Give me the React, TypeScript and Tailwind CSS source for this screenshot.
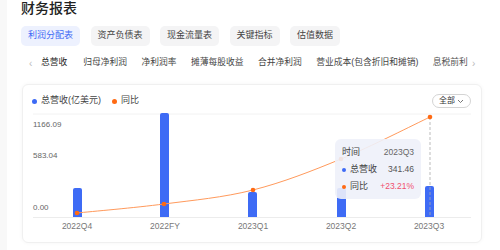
import React from "react";

const pills = ["利润分配表", "资产负债表", "现金流量表", "关键指标", "估值数据"];
const subTabs = ["总营收", "归母净利润", "净利润率", "摊薄每股收益", "合并净利润", "营业成本(包含折旧和摊销)", "息税前利"];

// bars in chart coordinates (svg is 460 x 135)
const bars = [
  { x: 50, top: 80, label: "2022Q4", cx: 54 },
  { x: 137, top: 5, label: "2022FY", cx: 142 },
  { x: 225, top: 84, label: "2023Q1", cx: 230 },
  { x: 314, top: 80, label: "2023Q2", cx: 318 },
  { x: 402, top: 78, label: "2023Q3", cx: 406 },
];
const dots = [
  [54, 105],
  [141, 96],
  [230, 82],
  [318, 51],
  [407, 9],
];
const base = 109;

export default function App() {
  return (
    <div
      className="w-[500px] h-[250px] overflow-hidden bg-white text-[#333] flex"
      style={{ fontFamily: '"Liberation Sans", "Noto Sans CJK SC", sans-serif' }}
    >
      <div className="w-[7px] shrink-0 bg-[#f8f8f8]" />
      <div className="flex-1">
        <div className="pl-[14px]">
          <div className="h-[16px] leading-[16px] text-[14px] font-medium text-[#222]">财务报表</div>

          {/* report type pills */}
          <div className="flex gap-[10.5px] mt-[10px] h-[20px]">
            {pills.map((p, i) => (
              <div
                key={p}
                className={`h-[20px] px-[7px] rounded-[5px] flex items-center text-[9px] ${
                  i === 0 ? "bg-[#edf1fe] text-[#3d6af5]" : "bg-[#f4f4f5] text-[#444]"
                }`}
              >
                {p}
              </div>
            ))}
          </div>

          {/* metric tabs */}
          <div className="flex items-center mt-[9px] h-[16px] text-[8.75px] text-[#444]">
            <span className="text-[#bbb] text-[10px] w-[20px] pl-[8px]">‹</span>
            <div className="flex gap-[14.5px] w-[427px] overflow-hidden whitespace-nowrap">
              {subTabs.map((t, i) => (
                <div
                  key={t}
                  className={`relative shrink-0 ${i === 0 ? "text-[#222] mr-[1.5px]" : ""} ${
                    i === subTabs.length - 1 ? "text-[#555]" : ""
                  }`}
                >
                  {t}
                  {i === 0 && (
                    <div className="absolute left-[7px] top-[17px] w-[12px] h-[2px] rounded bg-[#3d6af5]" />
                  )}
                </div>
              ))}
            </div>
            <span className="text-[#bbb] text-[10px] pl-[4px]">›</span>
          </div>
        </div>

        {/* chart card */}
        <div className="relative mt-[13px] ml-[15px] w-[460px] h-[159px] rounded-[6px] border border-[#f0f0f0] shadow-[0_0_4px_rgba(0,0,0,0.04)]">
          <div className="flex items-center h-[14px] mt-[9px] pl-[9px] pr-[10px] text-[9px] text-[#444]">
            <span className="w-[5px] h-[5px] rounded-full bg-[#3d6af5] mr-[4px]" />
            <span>总营收(亿美元)</span>
            <span className="w-[5px] h-[5px] rounded-full bg-[#ff6a13] ml-[11px] mr-[4px]" />
            <span>同比</span>
            <div className="ml-auto h-[14px] px-[6px] rounded-full border border-[#d4d4d4] flex items-center gap-[2px] text-[8px] text-[#333]">
              全部
              <svg width="7" height="5" viewBox="0 0 7 5">
                <path d="M1 1 L3.5 3.5 L6 1" fill="none" stroke="#666" strokeWidth="0.9" />
              </svg>
            </div>
          </div>

          <svg width="460" height="135" viewBox="0 0 460 135" className="block">
            <line x1="10" x2="448" y1="6" y2="6" stroke="#f2f2f2" strokeWidth="1" />
            <line x1="10" x2="448" y1={base + 0.5} y2={base + 0.5} stroke="#ececec" strokeWidth="1" />
            <g fontSize="8" fill="#666" fontFamily='"Liberation Sans", sans-serif'>
              <text x="10" y="19">1166.09</text>
              <text x="10" y="50">583.04</text>
              <text x="10" y="102">0.00</text>
            </g>
            {bars.map((b) => (
              <g key={b.label}>
                <path
                  d={`M${b.x} ${base} V${b.top + 2} Q${b.x} ${b.top} ${b.x + 2} ${b.top} H${b.x + 7} Q${b.x + 9} ${b.top} ${b.x + 9} ${b.top + 2} V${base} Z`}
                  fill="#3e6bf5"
                />
                <text x={b.cx} y="121" fontSize="8.5" fill="#777" textAnchor="middle" fontFamily='"Liberation Sans", sans-serif'>
                  {b.label}
                </text>
              </g>
            ))}
            <line x1="407" x2="407" y1="9" y2={base} stroke="#aaa" strokeWidth="0.8" strokeDasharray="3 2" />
            <path
              d="M54 105 C68.5 103.5 111.7 99.8 141 96 C170.3 92.2 200.5 89.5 230 82 C259.5 74.5 288.5 63.2 318 51 C347.5 38.8 392.2 16 407 9"
              fill="none"
              stroke="#ff9a5c"
              strokeWidth="1"
            />
            {dots.map(([x, y]) => (
              <circle key={x} cx={x} cy={y} r="2.3" fill="#ff6a13" />
            ))}
          </svg>

          {/* tooltip */}
          <div className="absolute left-[312px] top-[54px] w-[86px] h-[60px] rounded-[6px] bg-[#eef1f9]/90 px-[7px] pt-[5px] text-[9px]">
            <div className="flex justify-between h-[17px] items-center text-[#444]">
              <span>时间</span>
              <span className="text-[#666] text-[8.5px]">2023Q3</span>
            </div>
            <div className="flex items-center h-[17px] text-[#444]">
              <span className="w-[4px] h-[4px] rounded-full bg-[#3d6af5] mr-[4px]" />
              <span>总营收</span>
              <span className="ml-auto text-[#555] text-[8.5px]">341.46</span>
            </div>
            <div className="flex items-center h-[17px] text-[#444]">
              <span className="w-[4px] h-[4px] rounded-full bg-[#ff6a13] mr-[4px]" />
              <span>同比</span>
              <span className="ml-auto text-[#f0506e] text-[8.5px]">+23.21%</span>
            </div>
          </div>
        </div>
      </div>
    </div>
  );
}
